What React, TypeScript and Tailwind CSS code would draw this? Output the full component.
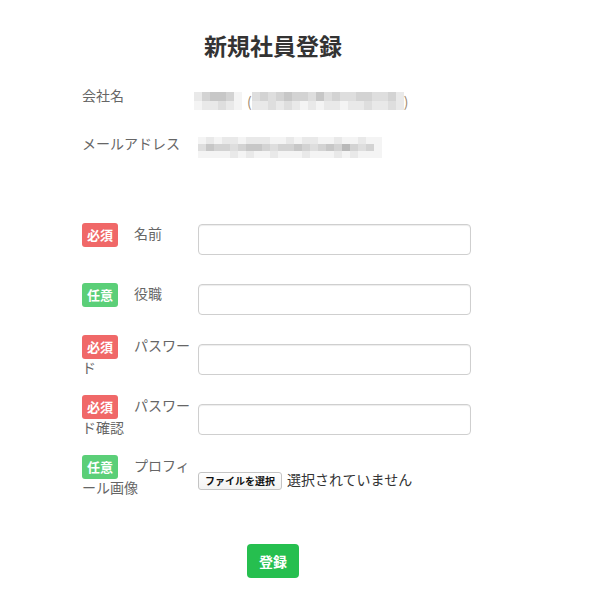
import React from "react";

const shades = [
  "bg-[#f4f4f4]",
  "bg-[#e9e9e9]",
  "bg-[#dedede]",
  "bg-[#d3d3d3]",
  "bg-[#c7c7c7]",
  "bg-[#b9b9b9]",
];

// blurred (pixelated) personal info, one digit per 8px block
function Pixels({ rows, rowH }: { rows: string[]; rowH: string }) {
  return (
    <div className="flex flex-col">
      {rows.map((r, ri) => (
        <div key={ri} className="flex">
          {r.split("").map((c, ci) => (
            <div key={ci} className={`w-2 ${rowH} ${shades[Number(c)]}`} />
          ))}
        </div>
      ))}
    </div>
  );
}

const fields = [
  { required: true, label: "名前", type: "text" },
  { required: false, label: "役職", type: "text" },
  { required: true, label: "パスワード", type: "password" },
  { required: true, label: "パスワード確認", type: "password" },
  { required: false, label: "プロフィール画像", type: "file" },
];

function Badge({ required }: { required: boolean }) {
  return (
    <span
      className={`inline-block w-9 h-6 mr-4 rounded-[3px] text-center align-middle text-[13px] leading-6 font-bold text-white ${
        required ? "bg-[#f06868]" : "bg-[#5bcf78]"
      }`}
    >
      {required ? "必須" : "任意"}
    </span>
  );
}

export default function App() {
  return (
    <div className="min-h-[609px] bg-white font-['Noto_Sans_CJK_JP',sans-serif] text-[14px] text-[#666]">
      <div className="ml-[82px] w-[382px] pt-[29px]">
        <h1 className="text-center text-[23px] leading-8 font-bold text-[#333]">新規社員登録</h1>

        {/* company info */}
        <div className="mt-[10px] grid grid-cols-[116px_auto] auto-rows-[48px] items-center">
          <div>会社名</div>
          <div className="mt-3 -ml-1 flex items-center">
            <Pixels rows={["134430", "011210"]} rowH="h-[9px]" />
            <span className="ml-[5px] text-[#a08a70] leading-[18px]">(</span>
            <Pixels
              rows={["2323433242322332231", "1121210101101121121"]}
              rowH="h-[9px]"
            />
            <span className="text-[#a08a70] leading-[18px]">)</span>
          </div>
          <div>メールアドレス</div>
          <div className="mt-2">
            <Pixels
              rows={[
                "01011011100101100100100",
                "24332344323343234353230",
                "00001010010001000101000",
              ]}
              rowH="h-[7px]"
            />
          </div>
        </div>

        {/* form */}
        <div className="mt-[42px] grid grid-cols-[116px_273px] auto-rows-[60px] items-center">
          {fields.map((f) => (
            <React.Fragment key={f.label}>
              <div className="pb-2 leading-[17px]">
                <Badge required={f.required} />
                {f.label}
              </div>
              {f.type === "file" ? (
                <div className="flex items-baseline whitespace-nowrap">
                  <button className="h-[18px] px-[6px] rounded-[3px] border border-[#c4c4c4] bg-gradient-to-b from-white to-[#f2f2f2] text-[10px] leading-4 font-bold text-[#111]">
                    ファイルを選択
                  </button>
                  <span className="ml-[5px] text-[#333]">選択されていません</span>
                </div>
              ) : (
                <input
                  type={f.type}
                  className="w-[273px] h-[31px] rounded-[4px] border border-[#cfcfcf] px-3 shadow-[inset_0_1px_1px_rgba(0,0,0,0.075)] outline-none"
                />
              )}
            </React.Fragment>
          ))}
        </div>

        <div className="mt-[35px] flex justify-center">
          <button className="w-[52px] h-[34px] rounded-[4px] bg-[#26bf4f] text-[14px] font-bold text-white">
            登録
          </button>
        </div>
      </div>
    </div>
  );
}
